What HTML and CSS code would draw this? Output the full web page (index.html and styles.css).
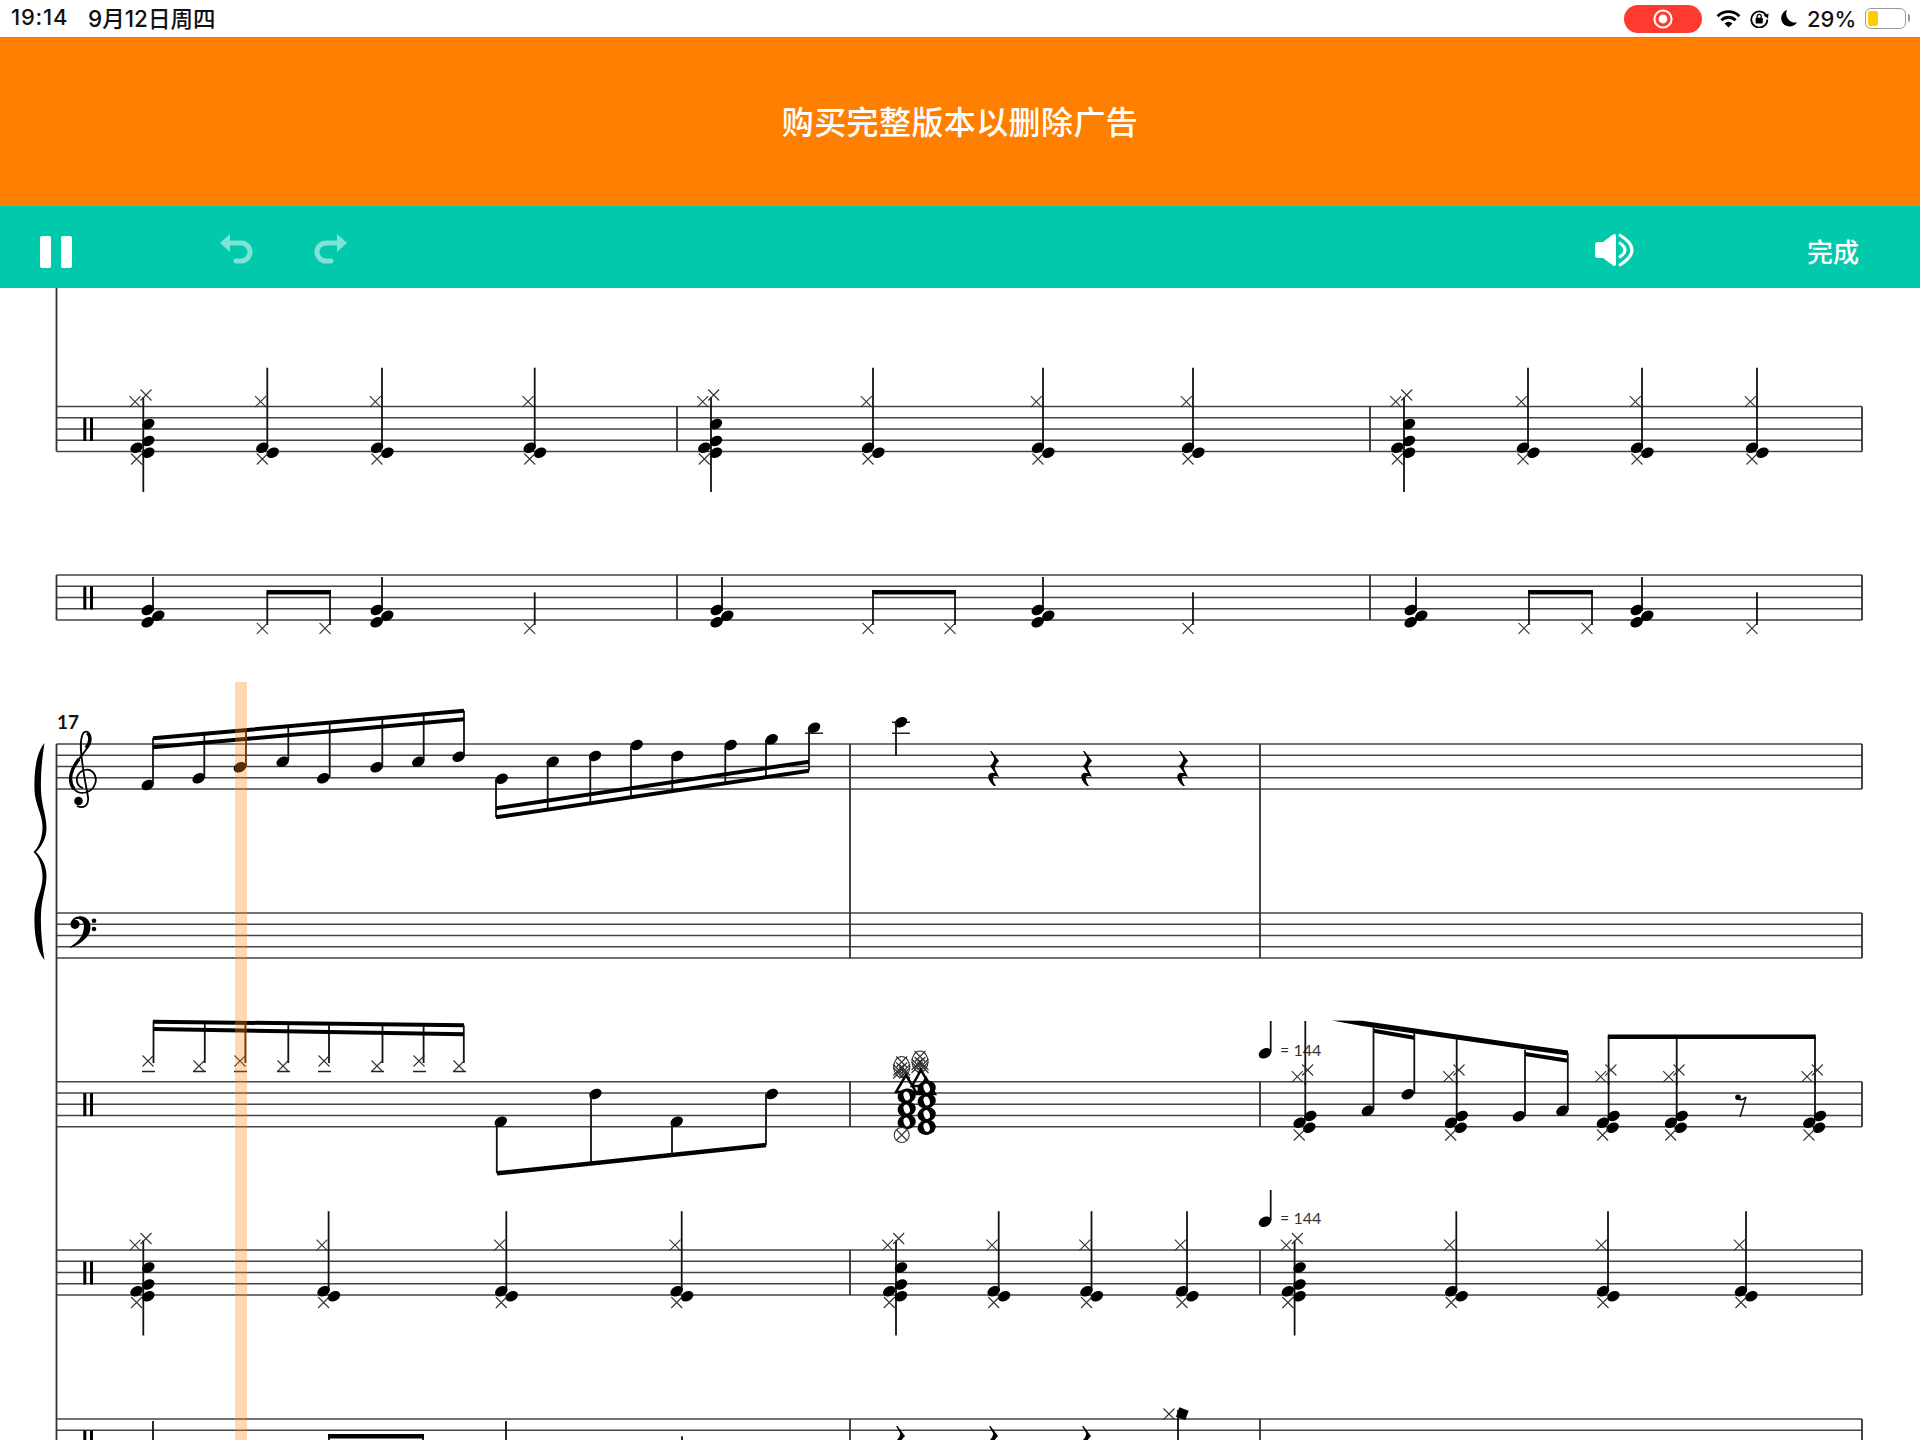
FILE: index.html
```html
<!DOCTYPE html>
<html lang="zh-CN">
<head>
  <meta charset="UTF-8">
  <title>购买完整版本以删除广告</title>
  <link rel="stylesheet" href="styles.css">
</head>
<body>
  <!-- Status bar -->
  <div class="status-bar">
    <span class="status-time">19:14</span>
    <span class="status-date">9月12日周四</span>
    <div class="status-right">
      <div class="record-pill">
        <svg width="20" height="20" viewBox="0 0 20 20"><circle cx="10" cy="10" r="8.6" fill="none" stroke="#fff" stroke-width="2"/><circle cx="10" cy="10" r="4.4" fill="#fff"/></svg>
      </div>
      <svg class="icon-wifi" width="25" height="18" viewBox="0 0 25 18">
        <path d="M1.6 6.2A15.5 15.5 0 0 1 23.4 6.2M5.4 10.2A10 10 0 0 1 19.6 10.2" fill="none" stroke="#000" stroke-width="2.8"/>
        <path d="M12.5 17.5L8.6 13.4A5.5 5.5 0 0 1 16.4 13.4Z" fill="#000"/>
      </svg>
      <svg class="icon-lock" width="19" height="18" viewBox="0 0 19 18">
        <path d="M16.5 6A8 8 0 1 0 17.3 9.5" fill="none" stroke="#000" stroke-width="1.8"/>
        <path d="M13.6 5.4L18.6 3.6L18 8.6Z" fill="#000"/>
        <rect x="5.6" y="7.8" width="7.2" height="5.8" rx="1" fill="#000"/>
        <path d="M7.2 8V6.4A2 2 0 0 1 11.2 6.4V8" fill="none" stroke="#000" stroke-width="1.3"/>
      </svg>
      <svg class="icon-moon" width="16" height="17" viewBox="0 0 16 17"><path d="M6 0A8.5 8.5 0 1 0 16 12.4A9 9 0 0 1 6 0Z" fill="#000"/></svg>
      <span class="battery-percent">29%</span>
      <div class="battery"><div class="battery-fill"></div></div>
    </div>
  </div>

  <!-- Ad -->
  <div class="ad-banner">购买完整版本以删除广告</div>

  <!-- Toolbar -->
  <div class="toolbar">
    <div class="pause-btn"><span></span><span></span></div>
    <svg class="icon-undo" width="33" height="32" viewBox="0 0 33 32">
      <path d="M0 10L10 1V19Z" fill="#7fe4d5"/>
      <path d="M9 10H21A9 9 0 0 1 21 28H16" fill="none" stroke="#7fe4d5" stroke-width="5" stroke-linecap="round"/>
    </svg>
    <svg class="icon-redo" width="33" height="32" viewBox="0 0 33 32">
      <path d="M0 10L10 1V19Z" fill="#7fe4d5"/>
      <path d="M9 10H21A9 9 0 0 1 21 28H16" fill="none" stroke="#7fe4d5" stroke-width="5" stroke-linecap="round"/>
    </svg>
    <svg class="icon-sound" width="40" height="34" viewBox="0 0 40 34">
      <path d="M3 9H8L18 1.500Q21 0 21 3V31Q21 34 18 32.500L8 25H3Q0 25 0 22V12Q0 9 3 9Z" fill="#fff"/>
      <path d="M24 9.500Q36 17 24 24.500M24 1.500Q50 17 24 32.500" fill="none" stroke="#fff" stroke-width="3.200"/>
    </svg>
    <button class="done-btn">完成</button>
  </div>

  <!-- Score -->
  <svg class="score" width="1920" height="1152" viewBox="0 288 1920 1152">
    <defs>
      <g id="staff">
        <path class="staff-line" d="M56.500 0H1862M56.500 11.250H1862M56.500 22.500H1862M56.500 33.750H1862M56.500 45H1862"/>
      </g>
      <g id="perc-clef">
        <rect x="83.300" y="11.500" width="3" height="23"/>
        <rect x="90" y="11.500" width="3" height="23"/>
      </g>
      <ellipse id="head" rx="6.600" ry="4.800" transform="rotate(-28)"/>
      <path id="xhead" class="x-mark" d="M-5.500-5.500L5.500 5.500M-5.500 5.500L5.500-5.500"/>
      <g id="hollow">
        <ellipse rx="9.200" ry="7.500" transform="rotate(-12)"/>
        <ellipse rx="3" ry="4.600" transform="rotate(-18)" fill="#fff"/>
      </g>
      <g id="circle-x">
        <circle class="x-mark" r="7.500" fill="#fff"/>
        <use href="#xhead"/>
      </g>
      <g id="hatch-oval">
        <ellipse class="x-mark" rx="8" ry="10.500" fill="#fff"/>
        <use href="#xhead" y="-5"/>
        <use href="#xhead" x="-3" y="3"/><use href="#xhead" x="3" y="3"/>
        <use href="#xhead" x="-3" y="6"/><use href="#xhead" x="3" y="6"/>
        <use href="#xhead" y="1"/>
      </g>
      <g id="chord-a">
        <path class="stem" d="M0-9.500V85.500"/>
        <use href="#head" x="5" y="17.500"/><use href="#head" x="5" y="34.500"/>
        <use href="#head" x="-6.700" y="41.200"/><use href="#head" x="5" y="46.200"/>
        <use href="#xhead" x="-8.300" y="-4.800"/><use href="#xhead" x="2.700" y="-11.500"/><use href="#xhead" x="-6.700" y="52.500"/>
      </g>
      <g id="chord-b">
        <path class="stem" d="M0-38.800V41"/>
        <use href="#head" x="-5" y="41.200"/><use href="#head" x="5.400" y="46.200"/>
        <use href="#xhead" x="-6.700" y="-4.800"/><use href="#xhead" x="-5" y="52.500"/>
      </g>
      <g id="chord-c">
        <path class="stem" d="M0 2V36"/>
        <use href="#head" x="-5.300" y="35"/><use href="#head" x="5.300" y="40.700"/><use href="#head" x="-5.300" y="47.300"/>
      </g>
      <g id="hit">
        <path class="stem" d="M0 17.300V50"/>
        <use href="#xhead" x="-5" y="53.300"/>
      </g>
      <g id="chord-d">
        <path class="stem" d="M0 0V38"/>
        <use href="#head" x="5" y="34.300"/><use href="#head" x="-5.700" y="41"/><use href="#head" x="4" y="46"/>
        <use href="#xhead" x="-8" y="-5"/><use href="#xhead" x="2.300" y="-11.700"/><use href="#xhead" x="-6" y="53.300"/>
      </g>
      <path id="quarter-rest" d="M-3-18H-1.500L6-8Q1-3 2 0L6 8Q2 6 0 8Q-1 12 3 17H1Q-6 11-4.500 6Q-3 3 2 4L-3-3Q2-8 1-11Z"/>
    </defs>

    <!-- staves and barlines -->
    <use href="#staff" y="406.500"/>
    <use href="#staff" y="575"/>
    <use href="#staff" y="744"/>
    <use href="#staff" y="913"/>
    <use href="#staff" y="1081.700"/>
    <use href="#staff" y="1250"/>
    <use href="#staff" y="1419"/>
    <path class="barline" d="M56.500 288V451.500M56.500 575V620M56.500 744V1440"/>
    <path class="barline" d="M677 406.500V451.500M1370 406.500V451.500M677 575V620M1370 575V620M1862 406.500V451.500M1862 575V620"/>
    <path class="barline" d="M850 744V958M1260 744V958M1862 744V789M1862 913V958"/>
    <path class="barline" d="M850 1081.700V1126.700M1260 1081.700V1126.700M1862 1081.700V1126.700"/>
    <path class="barline" d="M850 1250V1295M1260 1250V1295M1862 1250V1295"/>
    <path class="barline" d="M850 1419V1440M1260 1419V1440M1862 1419V1440"/>
    <use href="#perc-clef" y="406.500"/>
    <use href="#perc-clef" y="575"/>
    <use href="#perc-clef" y="1081.700"/>
    <use href="#perc-clef" y="1250"/>
    <use href="#perc-clef" y="1419"/>

    <!-- staff 1 -->
    <g transform="translate(0 406.500)">
      <use href="#chord-a" x="143.300"/><use href="#chord-a" x="711"/><use href="#chord-a" x="1404"/>
      <use href="#chord-b" x="267.300"/><use href="#chord-b" x="382"/><use href="#chord-b" x="534.700"/>
      <use href="#chord-b" x="873"/><use href="#chord-b" x="1043"/><use href="#chord-b" x="1193"/>
      <use href="#chord-b" x="1528"/><use href="#chord-b" x="1642"/><use href="#chord-b" x="1757"/>
    </g>

    <!-- staff 2 -->
    <g transform="translate(0 575)">
      <use href="#chord-c" x="153"/><use href="#chord-c" x="382"/><use href="#chord-c" x="722"/>
      <use href="#chord-c" x="1043"/><use href="#chord-c" x="1416"/><use href="#chord-c" x="1642"/>
      <use href="#hit" x="267.300"/><use href="#hit" x="330"/><use href="#hit" x="534.700"/>
      <use href="#hit" x="873"/><use href="#hit" x="955"/><use href="#hit" x="1193"/>
      <use href="#hit" x="1529"/><use href="#hit" x="1592"/><use href="#hit" x="1757"/>
      <path class="beam" d="M266.500 17.300H331M872 17.300H956M1528 17.300H1593"/>
    </g>

    <!-- staff 3 -->
    <text class="measure-no" x="57" y="729">17</text>
    <path class="clef-line" d="M83 788C76 786 74 776 82 771C92 766 98 776 95 784C92 793 80 796 74 789C67 780 72 768 79 759C85 751 91 745 90 737C89 730 84 730 82 736C79 745 82 760 84 775L88 797C89 806 83 809 77 806"/>
    <path class="clef-thick" d="M74 789C67 780 72 768 79 759M86 748C91 743 91 735 87 733"/>
    <circle cx="78.500" cy="801" r="4.300"/>
    <path d="M33.500 852C38 856 42 864 42.500 876C43 890 35 900 34.500 915C34 932 36 950 44.500 960C42 945 40.500 930 41 914C41.500 898 46.500 888 46.500 876C46.500 866 42 858 36 852C42 846 46.500 838 46.500 828C46.500 816 41.500 806 41 790C40.500 774 42 758 44.500 743C36 753 34 772 34.500 790C35 805 43 815 42.500 828C42 840 38 848 33.500 852Z"/>

    <use href="#head" x="147.700" y="785"/><use href="#head" x="198.700" y="778.300"/><use href="#head" x="240" y="767.300"/><use href="#head" x="282.700" y="761.700"/>
    <use href="#head" x="323.300" y="778.300"/><use href="#head" x="376.700" y="767.300"/><use href="#head" x="418.300" y="761.700"/><use href="#head" x="458.700" y="756.700"/>
    <path class="stem" d="M153 738V784M204.300 733.700V777M246 730V766M288.300 726.300V760M329.700 722.600V777M382.300 718V766M423.700 714.300V760M464 710.700V755"/>
    <path class="beam beam-thin" d="M153 738.300L464 710.700M153 747.300L464 719.300"/>

    <use href="#head" x="501.700" y="778.700"/><use href="#head" x="552.700" y="761.700"/><use href="#head" x="595" y="756"/><use href="#head" x="636.700" y="745"/>
    <use href="#head" x="677.300" y="756"/><use href="#head" x="730.700" y="745"/><use href="#head" x="771.700" y="739.300"/><use href="#head" x="814" y="727.700"/>
    <path class="stem" d="M496 779V817.300M547.700 762V809.600M590.300 757V803.200M631 746V797.200M672.300 757V791M725.300 746V783M766 740V777M809 729V770.700"/>
    <path class="beam beam-thin" d="M496 808.300L809 761.700M496 817.300L809 770.700"/>
    <path class="ledger" d="M805 733.300H823M892 722.300H910M892 733.300H910"/>
    <use href="#head" x="901" y="722.300"/>
    <path class="stem" d="M896 722V755.700"/>
    <use href="#quarter-rest" x="993" y="769"/>
    <use href="#quarter-rest" x="1086" y="769"/>
    <use href="#quarter-rest" x="1182" y="769"/>

    <!-- staff 4 bass clef -->
    <circle cx="75" cy="924.300" r="4.600"/>
    <path d="M71 924C71 917 80 914 86 918C92 922 92 932 86 938C81 943 76 946 70 948L70 947C78 942 84 936 84 926C84 919 76 917 73 921Z"/>
    <circle cx="94" cy="920.700" r="2.300"/>
    <circle cx="94" cy="929" r="2.300"/>

    <!-- staff 5 -->
    <path class="stem" d="M153.500 1021V1063M204.800 1022.300V1063M245.400 1022.800V1063M288.300 1023.400V1063M329 1023.800V1063M382.500 1024.400V1063M423.600 1024.800V1063M463.800 1025.300V1063"/>
    <path class="beam beam-thin" d="M153 1021.700L464 1025.300M153 1029L464 1034.300"/>
    <use href="#xhead" x="148" y="1061"/><use href="#xhead" x="199" y="1066"/><use href="#xhead" x="240" y="1061"/><use href="#xhead" x="283" y="1066"/>
    <use href="#xhead" x="324" y="1061"/><use href="#xhead" x="377" y="1066"/><use href="#xhead" x="419" y="1061"/><use href="#xhead" x="459" y="1066"/>
    <path class="ledger" d="M142 1071.500H155M193 1071.500H206M234 1071.500H247M277 1071.500H290M318 1071.500H331M371 1071.500H384M413 1071.500H426M453 1071.500H466"/>

    <use href="#head" x="500.800" y="1121.700"/><use href="#head" x="595.400" y="1094"/><use href="#head" x="676.700" y="1121.700"/><use href="#head" x="771.800" y="1094"/>
    <path class="stem" d="M496.800 1122V1173.300M591 1094V1163.400M672 1122V1154.900M766 1094V1145"/>
    <path class="beam" d="M497 1173.300L766 1145"/>

    <!-- overlapped notes of measure 2 -->
    <use href="#hatch-oval" x="901.700" y="1067"/>
    <use href="#hatch-oval" x="920" y="1061.500"/>
    <path class="x-mark x-mark-bold" d="M906 1075L896 1092H916ZM921 1070L912 1086H930ZM926 1078L917 1094H935Z"/>
    <use href="#hollow" x="906.700" y="1096"/><use href="#hollow" x="906.700" y="1109"/><use href="#hollow" x="906.700" y="1122"/>
    <use href="#hollow" x="926.700" y="1088"/><use href="#hollow" x="926.700" y="1101"/><use href="#hollow" x="926.700" y="1114.500"/><use href="#hollow" x="926.700" y="1127.300"/>
    <use href="#circle-x" x="901.700" y="1135"/>

    <!-- measure 3 of staff 5 -->
    <use href="#head" x="1265" y="1053.300"/>
    <path class="stem" d="M1270.700 1021V1052"/>
    <text class="tempo" x="1280" y="1056">= 144</text>
    <path class="stem" d="M1305.300 1021V1085M1456.700 1038V1085M1608.600 1036.700V1085M1676.700 1036.700V1085M1815 1036.700V1085"/>
    <use href="#chord-d" x="1305.300" y="1081.700"/><use href="#chord-d" x="1456.700" y="1081.700"/><use href="#chord-d" x="1608.600" y="1081.700"/>
    <use href="#chord-d" x="1676.700" y="1081.700"/><use href="#chord-d" x="1815" y="1081.700"/>
    <polygon points="1332,1020.500 1362,1020.800 1568,1050.500 1568,1055.500 1362,1026"/>
    <path class="beam beam-thin" d="M1373.500 1030.700L1414.300 1037.700M1525 1054L1568 1060.700"/>
    <use href="#head" x="1367.800" y="1110.700"/><use href="#head" x="1407.800" y="1094.300"/><use href="#head" x="1519" y="1116.300"/><use href="#head" x="1562.400" y="1110.700"/>
    <path class="stem" d="M1373.500 1026V1110M1414.300 1032V1094M1525 1050V1116M1567.800 1053V1110"/>
    <path class="beam" d="M1607.800 1036.700H1815.800"/>
    <circle cx="1738" cy="1097.300" r="2.800"/>
    <path class="rest-tail" d="M1738 1099Q1742 1101 1746 1097L1740 1117"/>

    <!-- staff 6 -->
    <g transform="translate(0 1250)">
      <use href="#chord-a" x="143.300"/><use href="#chord-a" x="896"/><use href="#chord-a" x="1294.600"/>
      <use href="#chord-b" x="328.600"/><use href="#chord-b" x="506.300"/><use href="#chord-b" x="681.700"/>
      <use href="#chord-b" x="998.700"/><use href="#chord-b" x="1091.500"/><use href="#chord-b" x="1187"/>
      <use href="#chord-b" x="1456.300"/><use href="#chord-b" x="1608"/><use href="#chord-b" x="1746"/>
    </g>
    <use href="#head" x="1265" y="1221.700"/>
    <path class="stem" d="M1270.700 1190V1220"/>
    <text class="tempo" x="1280" y="1224">= 144</text>

    <!-- staff 7, cut off by the window -->
    <g transform="translate(0 1419)">
      <use href="#chord-c" x="153"/><use href="#chord-c" x="506"/>
      <use href="#hit" x="329"/><use href="#hit" x="423"/><use href="#hit" x="682"/>
      <path class="beam" d="M328 17.300H424"/>
    </g>
    <use href="#quarter-rest" x="899" y="1444"/>
    <use href="#quarter-rest" x="992" y="1444"/>
    <use href="#quarter-rest" x="1085" y="1444"/>
    <use href="#xhead" x="1169" y="1414"/>
    <rect x="1177.500" y="1408.500" width="10" height="10" transform="rotate(20 1182 1413)"/>
    <path class="stem" d="M1178 1410V1440"/>

    <!-- play position -->
    <rect class="play-cursor" x="235" y="682" width="12" height="758"/>
  </svg>
</body>
</html>
```
FILE: styles.css
```css
/* Reset & Body */
body {
  margin: 0;
  background: #fff;
  font-family: "Inter", "Noto Sans CJK SC", sans-serif;
  overflow: hidden;
}

/* Status bar */
.status-bar {
  display: flex;
  align-items: center;
  height: 37px;
  padding-left: 11px;
  color: #111;
  font-size: 22px;
  font-weight: 500;
}

.status-time {
  width: 77px;
  margin-top: -3px;
  letter-spacing: 0.8px;
}

.status-date {
  margin-top: -4px;
  font-size: 22.5px;
  white-space: nowrap;
}

.status-right {
  display: flex;
  align-items: center;
  margin-left: auto;
  margin-right: 14px;
}

.record-pill {
  display: flex;
  align-items: center;
  justify-content: center;
  width: 78px;
  height: 28px;
  border-radius: 14px;
  background: #ff3b30;
}

.icon-wifi {
  margin-left: 14px;
}

.icon-lock {
  margin-left: 9px;
}

.icon-moon {
  margin-left: 12px;
}

.battery-percent {
  width: 48px;
  margin-left: 10px;
  font-size: 22px;
  text-align: center;
}

.battery {
  position: relative;
  box-sizing: border-box;
  width: 41px;
  height: 21px;
  margin-left: 10px;
  padding: 2px;
  border: 1.5px solid #999;
  border-radius: 6px;
}

.battery::after {
  content: "";
  position: absolute;
  top: 5px;
  right: -5px;
  width: 2px;
  height: 8px;
  border-radius: 0 2px 2px 0;
  background: #999;
}

.battery-fill {
  width: 10px;
  height: 100%;
  border-radius: 2px;
  background: #ffcc00;
}

/* Ad */
.ad-banner {
  display: flex;
  align-items: center;
  justify-content: center;
  box-sizing: border-box;
  height: 169px;
  padding-bottom: 5px;
  border-top: 1px solid #e8742c;
  background: #ff7f00;
  color: #fff;
  font-size: 32px;
  font-weight: 500;
  letter-spacing: 0.4px;
}

/* Toolbar */
.toolbar {
  display: flex;
  align-items: center;
  box-sizing: border-box;
  height: 82px;
  padding: 0 61px 0 40px;
  background: #00c9ac;
}

.pause-btn {
  display: flex;
  gap: 10px;
  margin-top: 9px;
}

.pause-btn span {
  width: 11px;
  height: 32px;
  border-radius: 2px;
  background: #fff;
}

.icon-undo {
  margin-left: 148px;
  margin-top: 3px;
}

.icon-redo {
  margin-left: 61px;
  margin-top: 3px;
  transform: scaleX(-1);
}

.icon-sound {
  margin-left: auto;
  margin-top: 6px;
}

.done-btn {
  margin-left: 172px;
  margin-top: 6px;
  padding: 0;
  border: none;
  background: none;
  color: #fff;
  font-family: "Noto Sans CJK SC", sans-serif;
  font-size: 26px;
  font-weight: 500;
}

/* Score */
.score {
  display: block;
}

.staff-line {
  fill: none;
  stroke: #444;
  stroke-width: 1.5;
}

.barline {
  fill: none;
  stroke: #333;
  stroke-width: 1.8;
}

.stem {
  fill: none;
  stroke: #111;
  stroke-width: 1.8;
}

.ledger {
  fill: none;
  stroke: #222;
  stroke-width: 1.5;
}

.beam {
  fill: none;
  stroke: #000;
  stroke-width: 4.5;
}

.beam-thin {
  stroke-width: 4;
}

.x-mark {
  fill: none;
  stroke: #333;
  stroke-width: 1.1;
}

.x-mark-bold {
  stroke: #000;
  stroke-width: 2.5;
}

circle.x-mark {
  fill: #fff;
}

.clef-line {
  fill: none;
  stroke: #000;
  stroke-width: 1.8;
}

.clef-thick {
  fill: none;
  stroke: #000;
  stroke-width: 3.5;
}

.rest-tail {
  fill: none;
  stroke: #111;
  stroke-width: 1.5;
}

.measure-no {
  font-family: "Lato", sans-serif;
  font-size: 19px;
  font-weight: 700;
  fill: #111;
}

.tempo {
  font-family: "Lato", sans-serif;
  font-size: 16px;
  fill: #333;
}

.play-cursor {
  fill: #ff8c14;
  fill-opacity: 0.33;
}
```
